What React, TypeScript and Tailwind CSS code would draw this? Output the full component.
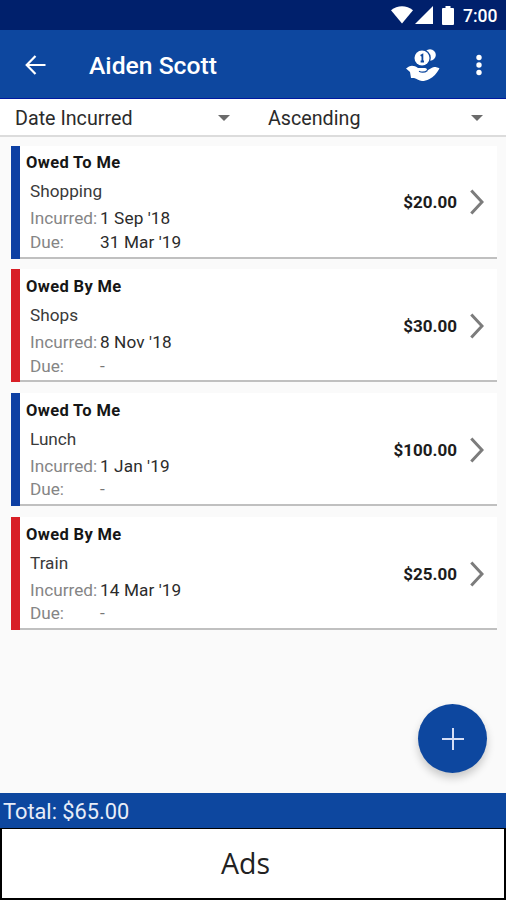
import type { ReactNode } from 'react';

type Debt = {
  direction: 'to' | 'by';
  name: string;
  incurred: string;
  due: string;
  amount: string;
};

const debts: Debt[] = [
  { direction: 'to', name: 'Shopping', incurred: "1 Sep '18", due: "31 Mar '19", amount: '$20.00' },
  { direction: 'by', name: 'Shops', incurred: "8 Nov '18", due: '-', amount: '$30.00' },
  { direction: 'to', name: 'Lunch', incurred: "1 Jan '19", due: '-', amount: '$100.00' },
  { direction: 'by', name: 'Train', incurred: "14 Mar '19", due: '-', amount: '$25.00' },
];

function StatusBar() {
  return (
    <div className="flex h-[30px] shrink-0 items-center justify-end bg-[#00206c] pr-[9px] text-white">
      <svg width="22" height="18" viewBox="0 0 22 18" fill="currentColor" aria-hidden="true">
        <path d="M0 4.200C6.500-1 15.500-1 22 4.200L11 17.500Z" />
      </svg>
      <svg className="ml-[2px]" width="18" height="18" viewBox="0 0 18 18" fill="currentColor" aria-hidden="true">
        <path d="M18 0V18H0Z" />
      </svg>
      <svg className="ml-[9px]" width="12" height="19" viewBox="0 0 12 19" fill="currentColor" aria-hidden="true">
        <path d="M3.500 0h5v2H11a1 1 0 0 1 1 1v15a1 1 0 0 1-1 1H1a1 1 0 0 1-1-1V3a1 1 0 0 1 1-1h2.500Z" />
      </svg>
      <span className="ml-[9px] w-[34px] whitespace-nowrap pt-[2px] text-[17.500px] font-medium leading-[30px]">7:00</span>
    </div>
  );
}

function CoinsHandIcon() {
  return (
    <svg width="34" height="32" viewBox="0 0 34 32" aria-hidden="true">
      <circle cx="24" cy="6" r="5.800" fill="#fff" />
      <circle cx="16" cy="9" r="8.800" fill="#0d479f" />
      <circle cx="16" cy="9" r="7.500" fill="#fff" />
      <path d="M14.600 6.800l1.800-1v6.700M14.600 12.500h3.400" fill="none" stroke="#0d479f" strokeWidth="1.800" />
      <path
        d="M0 19.500l3-2c3-1.500 6-.5 9 1.500h7c2.500 0 2.500 3 .5 3.500l6-3.500c2.500-1.500 5-1 8 .5-3 5-6 8.500-10 10.500-3 1.500-5 2-7.500 2-3 0-5-2.500-8-3H5L4 23z"
        fill="#fff"
      />
      <path d="M13 22.300c3 1.500 6 1 8.500-.8" fill="none" stroke="#0d479f" strokeWidth="1.200" />
    </svg>
  );
}

function AppBar() {
  return (
    <header className="flex h-[69px] shrink-0 items-center border-b border-[#0019a0] bg-[#0d479f] pl-[25px] pr-[23px] pt-[2px] text-white">
      <button type="button" aria-label="Back">
        <svg width="21" height="20" viewBox="0 0 21 20" fill="none" stroke="currentColor" strokeWidth="2.200">
          <path d="M10.500 1L1.700 10l8.800 9M2 10h18.500" />
        </svg>
      </button>
      <h1 className="ml-[43px] flex-1 pt-[1px] text-[24.700px] font-medium leading-7">Aiden Scott</h1>
      <button type="button" aria-label="Settle debts">
        <CoinsHandIcon />
      </button>
      <button type="button" aria-label="More options" className="ml-[35px]">
        <svg width="8" height="22" viewBox="0 0 8 22" fill="currentColor">
          <circle cx="4" cy="3.500" r="2.700" />
          <circle cx="4" cy="11" r="2.700" />
          <circle cx="4" cy="18.500" r="2.700" />
        </svg>
      </button>
    </header>
  );
}

function Spinner({ children }: { children: ReactNode }) {
  return (
    <button type="button" className="flex h-full w-[253px] items-center justify-between pl-[15px] pr-[23px] pt-[2px] text-left">
      <span className="pt-[2px] text-[19.700px] leading-6 text-[#2b2b2b]">{children}</span>
      <svg width="12" height="6" viewBox="0 0 12 6" fill="#6b6b6b" aria-hidden="true">
        <path d="M0 0h12L6 6z" />
      </svg>
    </button>
  );
}

function DebtCard({ debt }: { debt: Debt }) {
  const owedToMe = debt.direction === 'to';

  return (
    <li className="flex h-[113px]">
      <div className={owedToMe ? 'w-[9px] bg-[#0d3fa3]' : 'w-[9px] bg-[#d81f26]'} />
      <div className="flex flex-1 items-center border-b-2 border-[#c0c0c0] bg-white pl-[6px] pr-[13px]">
        <div className="flex-1 self-start pt-[5.600px]">
          <h2 className="text-[16.500px] font-bold leading-6 tracking-[0.35px] text-[#161616]">
            {owedToMe ? 'Owed To Me' : 'Owed By Me'}
          </h2>
          <div className="pl-[4px] text-[17.200px]">
            <p className="mt-[4px] leading-6 text-[#3a3a3a]">{debt.name}</p>
            <dl className="mt-[4px] grid grid-cols-[70px_1fr] leading-[23.500px]">
              <dt className="text-[#858585]">Incurred:</dt>
              <dd className="tracking-[0.1px] text-[#2b2b2b]">{debt.incurred}</dd>
              <dt className="text-[#858585]">Due:</dt>
              <dd className={debt.due === '-' ? 'text-[#777]' : 'tracking-[0.1px] text-[#2b2b2b]'}>{debt.due}</dd>
            </dl>
          </div>
        </div>
        <span className="pt-[4px] text-[17px] font-bold text-[#1c1c1c]">{debt.amount}</span>
        <svg className="ml-[13px] mt-[2px]" width="14" height="26" viewBox="0 0 14 26" fill="none" stroke="#7c7c7c" strokeWidth="3" aria-hidden="true">
          <path d="M1.300 1.500L12 13 1.300 24.500" />
        </svg>
      </div>
    </li>
  );
}

export default function App() {
  return (
    <div className="relative flex h-[900px] w-[506px] flex-col overflow-hidden bg-[#fafafa] font-[Roboto,sans-serif]">
      <StatusBar />
      <AppBar />
      <div className="flex h-[38px] shrink-0 border-b-2 border-[#dcdcdc] bg-white">
        <Spinner>Date Incurred</Spinner>
        <Spinner>Ascending</Spinner>
      </div>

      <ul className="flex flex-1 flex-col gap-[10.800px] pl-[11px] pr-[9px] pt-[8.700px]">
        {debts.map(debt => (
          <DebtCard key={debt.name} debt={debt} />
        ))}
      </ul>

      <button
        type="button"
        aria-label="Add debt"
        className="absolute bottom-[127px] right-[19px] flex size-[69px] items-center justify-center rounded-full bg-[#0d479f] shadow-[0_5px_8px_rgba(0,0,0,0.2)]"
      >
        <svg width="22" height="22" viewBox="0 0 22 22" stroke="#d5def5" strokeWidth="2" aria-hidden="true">
          <path d="M11 0v22M0 11h22" />
        </svg>
      </button>

      <div className="h-[35px] shrink-0 bg-[#0d479f] pl-[3px] text-[21.800px] leading-[38px] text-[#e8edf8]">Total: $65.00</div>
      <div className="flex h-[72px] shrink-0 items-center justify-center border-2 border-t border-black bg-white pb-[1px] pr-[15px] font-['Open_Sans',sans-serif] text-[28.500px] text-[#222]">
        Ads
      </div>
    </div>
  );
}
